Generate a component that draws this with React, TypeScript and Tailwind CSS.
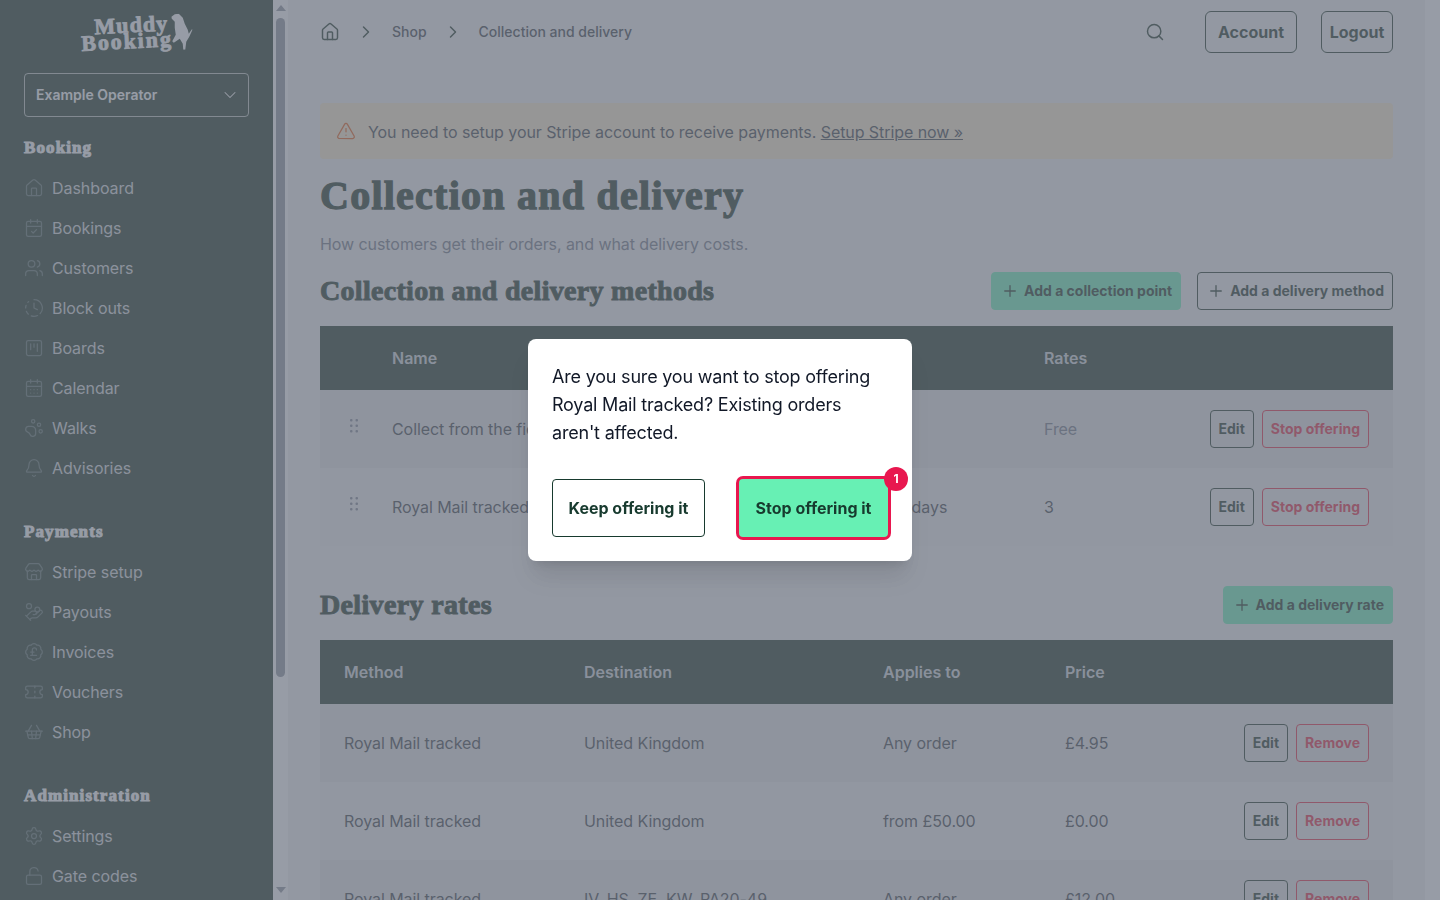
import React from "react";
import {
  House, CalendarCheck, Users, ClockFading, SquareKanban, CalendarDays, PawPrint, Bell,
  Store, HandCoins, BadgePoundSterling, Ticket, ShoppingBasket, Settings, LockOpen,
  ChevronDown, ChevronRight, Search, TriangleAlert, Plus,
} from "lucide-react";

const serif = "font-['Liberation_Serif',serif] font-bold";

function NavItem({ icon: Icon, label }: { icon: any; label: string }) {
  return (
    <div className="flex h-10 items-center gap-2 text-base tracking-[-0.07px] text-[#d8dadd]">
      <Icon size={20} strokeWidth={1.5} className="text-[#566a64]" />
      <span>{label}</span>
    </div>
  );
}

function NavSection({ title, items, className }: { title: string; items: [any, string][]; className?: string }) {
  return (
    <div className={className}>
      <h3 className={`mb-2 h-6 text-[17px] leading-6 tracking-[1.1px] text-white [-webkit-text-stroke:0.9px_currentColor] ${serif}`}>{title}</h3>
      {items.map(([icon, label]) => (
        <NavItem key={label} icon={icon} label={label} />
      ))}
    </div>
  );
}

function Sidebar() {
  return (
    <aside className="flex h-full w-[273px] shrink-0 flex-col bg-[#112b18] px-6">
      <div className="relative mx-auto mt-[17px] h-[41px] w-[112px] -rotate-3 text-white">
        <div className={`pl-[14px] text-[22px] leading-[16px] tracking-[1.1px] [-webkit-text-stroke:0.8px_currentColor] ${serif}`}>Muddy</div>
        <div className={`text-[22px] leading-[16px] tracking-[1.9px] [-webkit-text-stroke:0.8px_currentColor] ${serif}`}>Booking</div>
        <svg viewBox="0 0 22 36" className="absolute -top-[1px] right-0 h-[36px] w-[22px] rotate-3" fill="currentColor">
          <path d="M0.7 3 L4 0.5 L8 0 L12 4 L14 10 L17 16 L18 20 L21.5 15 L21.5 16.5 L18.5 23 L15.5 28 L14.5 36 L12.5 36 L12 30 L9 25 L3 29 L1.5 27.5 L5 21 L4 14 L4 8 L1 5 Z" />
        </svg>
      </div>
      <div className="mt-[15px] flex h-11 w-[225px] shrink-0 items-center justify-between rounded border border-white/70 pl-[11px] pr-2 text-sm font-semibold text-white">
        <span>Example Operator</span>
        <ChevronDown size={20} strokeWidth={1.25} />
      </div>
      <NavSection
        className="mt-[19px]"
        title="Booking"
        items={[
          [House, "Dashboard"], [CalendarCheck, "Bookings"], [Users, "Customers"], [ClockFading, "Block outs"],
          [SquareKanban, "Boards"], [CalendarDays, "Calendar"], [PawPrint, "Walks"], [Bell, "Advisories"],
        ]}
      />
      <NavSection
        className="mt-8"
        title="Payments"
        items={[
          [Store, "Stripe setup"], [HandCoins, "Payouts"], [BadgePoundSterling, "Invoices"], [Ticket, "Vouchers"], [ShoppingBasket, "Shop"],
        ]}
      />
      <NavSection className="mt-8" title="Administration" items={[[Settings, "Settings"], [LockOpen, "Gate codes"]]} />
    </aside>
  );
}

function Scrollbar() {
  return (
    <div className="flex h-full w-[15px] shrink-0 flex-col items-center bg-white">
      <svg viewBox="0 0 10 6" className="mt-[5px] h-[6px] w-[10px] fill-[#8a8f99]"><path d="M5 0 10 6H0Z" /></svg>
      <div className="mt-[7px] h-[659px] w-[9px] rounded-full bg-[#8a8f99]" />
      <svg viewBox="0 0 10 6" className="mt-auto mb-[7px] h-[6px] w-[10px] fill-[#8a8f99]"><path d="M0 0H10L5 6Z" /></svg>
    </div>
  );
}

function Btn({ children, variant = "outline", plus }: { children: React.ReactNode; variant?: "outline" | "green" | "red"; plus?: boolean }) {
  const styles = {
    outline: "border-[#112b18] text-[#112b18]",
    green: "border-[#67f0b4] bg-[#67f0b4] text-[#112b18]",
    red: "border-[#e8203a] text-[#e8203a]",
  }[variant];
  return (
    <button className={`flex h-[38px] items-center rounded border text-sm font-bold ${plus ? "pl-[9px] pr-2" : "px-2"} ${styles}`}>
      {plus && <Plus size={18} strokeWidth={1.75} className="mr-[5px]" />}
      {children}
    </button>
  );
}

function Table1() {
  const rows = [
    { name: "Collect from the field", time: "", rates: "Free", dim: true },
    { name: "Royal Mail tracked", time: "2-3 working days", rates: "3", dim: false },
  ];
  return (
    <div className="mt-4">
      <div className="grid h-16 grid-cols-[72px_424px_228px_1fr] items-center bg-[#112b18] text-base font-semibold text-[#d1d5db]">
        <span />
        <span>Name</span>
        <span>Delivery</span>
        <span>Rates</span>
      </div>
      {rows.map((r, i) => (
        <div key={r.name} className={`grid h-[78px] grid-cols-[72px_424px_228px_1fr] items-center text-base tracking-[-0.07px] text-[#33393f] ${i % 2 === 0 ? "bg-[#e3e3e3]" : "bg-[#efefef]"}`}>
          <svg viewBox="0 0 8 14" className="ml-[30px] -mt-[6px] h-[14px] w-[8px] fill-[#7d8290]">
            <rect x="0" y="0" width="2.5" height="2.5" rx="1" /><rect x="5.5" y="0" width="2.5" height="2.5" rx="1" />
            <rect x="0" y="5.5" width="2.5" height="2.5" rx="1" /><rect x="5.5" y="5.5" width="2.5" height="2.5" rx="1" />
            <rect x="0" y="11" width="2.5" height="2.5" rx="1" /><rect x="5.5" y="11" width="2.5" height="2.5" rx="1" />
          </svg>
          <span>{r.name}</span>
          <span>{r.time}</span>
          <div className="flex items-center justify-between pr-6">
            <span className={r.dim ? "text-[#6b7280]" : ""}>{r.rates}</span>
            <div className="flex gap-2 tracking-normal">
              <Btn>Edit</Btn>
              <Btn variant="red">Stop offering</Btn>
            </div>
          </div>
        </div>
      ))}
    </div>
  );
}

function Table2() {
  const rows = [
    ["Royal Mail tracked", "United Kingdom", "Any order", "£4.95"],
    ["Royal Mail tracked", "United Kingdom", "from £50.00", "£0.00"],
    ["Royal Mail tracked", "IV, HS, ZE, KW, PA20-49", "Any order", "£12.00"],
  ];
  return (
    <div className="mt-4">
      <div className="grid h-16 grid-cols-[240px_299px_182px_1fr] items-center bg-[#112b18] pl-6 text-base font-semibold text-[#d1d5db]">
        <span>Method</span>
        <span>Destination</span>
        <span>Applies to</span>
        <span>Price</span>
      </div>
      {rows.map((r, i) => (
        <div key={i} className={`grid h-[78px] grid-cols-[240px_299px_182px_1fr] items-center pl-6 text-base tracking-[-0.07px] text-[#33393f] ${i % 2 === 0 ? "bg-[#e3e3e3]" : "bg-[#efefef]"}`}>
          <span>{r[0]}</span>
          <span>{r[1]}</span>
          <span>{r[2]}</span>
          <div className="flex items-center justify-between pr-6">
            <span>{r[3]}</span>
            <div className="flex gap-2 tracking-normal">
              <Btn>Edit</Btn>
              <Btn variant="red">Remove</Btn>
            </div>
          </div>
        </div>
      ))}
    </div>
  );
}

function Main() {
  return (
    <main className="h-full min-w-0 flex-1 bg-[#f0f0f0] px-8">
      <header className="flex h-[64px] items-center text-[#112b18]">
        <nav className="flex items-center gap-4 text-sm font-medium text-[#33393f]">
          <House size={20} strokeWidth={1.75} className="text-[#112b18]" />
          <ChevronRight size={20} strokeWidth={1.75} className="text-[#112b18]" />
          <span>Shop</span>
          <ChevronRight size={20} strokeWidth={1.75} className="text-[#112b18]" />
          <span>Collection and delivery</span>
        </nav>
        <Search size={20} strokeWidth={1.75} className="ml-auto mr-10" />
        <button className="mb-[1px] h-[42px] w-[92px] rounded-md border border-[#112b18] text-base font-bold">Account</button>
        <button className="mb-[1px] ml-6 h-[42px] w-[72px] rounded-md border border-[#112b18] text-base font-bold">Logout</button>
      </header>
      <div className="mt-[39px] flex h-14 items-center gap-3 rounded bg-[#fae9c8] pl-4 text-base tracking-[-0.07px] text-[#33393f]">
        <TriangleAlert size={20} strokeWidth={1.5} className="text-[#ea580c]" />
        <span className="pt-[2px]">
          You need to setup your Stripe account to receive payments. <u>Setup Stripe now »</u>
        </span>
      </div>
      <h1 className={`mt-[13px] text-[40px] leading-[48px] tracking-[1.25px] text-[#112b18] [-webkit-text-stroke:1.3px_currentColor] ${serif}`}>Collection and delivery</h1>
      <p className="mt-3 text-base leading-6 tracking-[-0.07px] text-[#6b7280]">How customers get their orders, and what delivery costs.</p>
      <div className="mt-4 flex h-[38px] items-center">
        <h2 className={`text-[28px] leading-8 tracking-[0.3px] text-[#112b18] [-webkit-text-stroke:1px_currentColor] ${serif}`}>Collection and delivery methods</h2>
        <div className="ml-auto flex gap-4">
          <Btn variant="green" plus>Add a collection point</Btn>
          <Btn plus>Add a delivery method</Btn>
        </div>
      </div>
      <Table1 />
      <div className="mt-10 flex h-[38px] items-center">
        <h2 className={`text-[28px] leading-8 tracking-[0.35px] text-[#112b18] [-webkit-text-stroke:1px_currentColor] ${serif}`}>Delivery rates</h2>
        <div className="ml-auto">
          <Btn variant="green" plus>Add a delivery rate</Btn>
        </div>
      </div>
      <Table2 />
    </main>
  );
}

export default function App() {
  return (
    <div className="relative flex h-screen w-full overflow-hidden bg-white font-['Inter',sans-serif]">
      <Sidebar />
      <Scrollbar />
      <Main />
      <div className="h-full w-[15px] shrink-0 bg-white" />
      <div className="fixed inset-0 flex items-center justify-center bg-[#6b7280]/70">
        <div className="w-[384px] rounded-lg bg-white p-6 shadow-xl">
          <p className="text-lg leading-7 tracking-[-0.2px] text-[#111827]">
            Are you sure you want to stop offering Royal Mail tracked? Existing orders aren't affected.
          </p>
          <div className="mt-8 flex items-center gap-[34px]">
            <button className="h-[58px] w-[153px] whitespace-nowrap rounded border border-[#173a2e] text-base font-bold text-[#173a2e]">Keep offering it</button>
            <button className="relative h-[58px] w-[149px] whitespace-nowrap rounded bg-[#67f0b4] text-base font-bold text-[#173a2e] ring-3 ring-[#e8174f]">
              Stop offering it
              <span className="absolute -right-[20px] -top-[12px] flex h-6 w-6 items-center justify-center rounded-full bg-[#e8174f] text-xs font-bold text-white">1</span>
            </button>
          </div>
        </div>
      </div>
    </div>
  );
}
